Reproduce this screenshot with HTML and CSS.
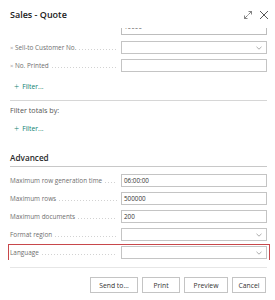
FILE: index.html
```html
<!DOCTYPE html>
<html>
<head>
<meta charset="utf-8">
<link rel="stylesheet" href="styles.css">
</head>
<body>
<div class="dialog">
  <header class="head">
    <h1 class="title">Sales - Quote</h1>
    <div class="tools">
      <svg class="ico" width="10" height="10" viewBox="0 0 10 10">
        <path d="M5.5 1.5H8.5V4.5M8.5 1.5L5.3 4.7M4.5 8.5H1.5V5.5M1.5 8.5L4.7 5.3" fill="none" stroke="#666" stroke-width="0.8"/>
      </svg>
      <svg class="ico" width="10" height="10" viewBox="0 0 10 10">
        <path d="M1 1L9 9M9 1L1 9" fill="none" stroke="#444" stroke-width="0.9"/>
      </svg>
    </div>
  </header>
  <div class="scroll">
    <div class="row partial">
      <span></span>
      <div class="box"><span class="val">10000</span></div>
    </div>
    <div class="rows first">
      <div class="row">
        <label class="lbl"><span class="x">×</span>Sell-to Customer No.<i class="lead"></i></label>
        <div class="box select"><svg class="chev" width="6" height="4" viewBox="0 0 6 4"><path d="M0.5 0.8L3 3.2L5.5 0.8" fill="none" stroke="#888" stroke-width="0.7"/></svg></div>
      </div>
      <div class="row">
        <label class="lbl"><span class="x">×</span>No. Printed<i class="lead"></i></label>
        <div class="box"></div>
      </div>
    </div>
    <div class="filter f1"><span class="plus">+</span>Filter...</div>
    <div class="sep"></div>
    <div class="cap">Filter totals by:</div>
    <div class="filter f2"><span class="plus">+</span>Filter...</div>
    <h2 class="section">Advanced</h2>
    <div class="rows adv">
      <div class="row">
        <label class="lbl">Maximum row generation time<i class="lead"></i></label>
        <div class="box"><span class="val">06:00:00</span></div>
      </div>
      <div class="row">
        <label class="lbl">Maximum rows<i class="lead"></i></label>
        <div class="box"><span class="val">500000</span></div>
      </div>
      <div class="row">
        <label class="lbl">Maximum documents<i class="lead"></i></label>
        <div class="box"><span class="val">200</span></div>
      </div>
      <div class="row">
        <label class="lbl">Format region<i class="lead"></i></label>
        <div class="box select"><svg class="chev" width="6" height="4" viewBox="0 0 6 4"><path d="M0.5 0.8L3 3.2L5.5 0.8" fill="none" stroke="#888" stroke-width="0.7"/></svg></div>
      </div>
    </div>
    <div class="highlight">
      <div class="row">
        <label class="lbl">Language<i class="lead"></i></label>
        <div class="box select"><svg class="chev" width="6" height="4" viewBox="0 0 6 4"><path d="M0.5 0.8L3 3.2L5.5 0.8" fill="none" stroke="#888" stroke-width="0.7"/></svg></div>
      </div>
    </div>
  </div>
  <div class="sep light"></div>
  <footer class="foot">
    <button class="btn w-send">Send to...</button>
    <button class="btn w-print">Print</button>
    <button class="btn w-prev">Preview</button>
    <button class="btn w-cancel">Cancel</button>
  </footer>
</div>
</body>
</html>
```
FILE: styles.css
```css
* { box-sizing: border-box; }
html, body { margin: 0; padding: 0; background: #fff; }
body { font-family: "Open Sans", "Noto Sans", sans-serif; color: #333; width: 275px; height: 300px; overflow: hidden; }
.dialog { width: 275px; height: 300px; display: flex; flex-direction: column; }
.head { height: 28px; flex: none; display: flex; justify-content: space-between; align-items: flex-start; padding: 8px 6px 0 10px; }
.title { margin: 0; font-size: 9px; line-height: 13px; font-weight: 600; color: #212121; }
.tools { display: flex; gap: 6px; padding-top: 2px; }
.ico { display: block; }
.scroll { height: 232px; flex: none; overflow: hidden; padding: 0 8px 0 10px; }
.row { display: grid; grid-template-columns: 111px 1fr; height: 13px; }
.partial { margin-top: -6px; }
.box { border: 1px solid #c4c4c4; height: 13px; background: #fff; display: flex; align-items: center; position: relative; padding-left: 2px; }
.partial .box { border-color: #bdbdbd; align-items: flex-start; }
.partial .val { line-height: 7px; color: #555; }
.val { font-size: 6.3px; color: #333; line-height: 11px; }
.select .chev { position: absolute; right: 4px; top: 4px; }
.rows { display: flex; flex-direction: column; gap: 5px; }
.rows.first { margin-top: 6px; }
.lbl { display: flex; align-items: center; font-size: 6.4px; color: #6e6e6e; white-space: nowrap; padding-right: 4px; }
.x { color: #a0a0a0; margin-right: 1.5px; font-size: 6px; }
.lead { flex: 1; height: 1px; margin: 3px 0 0 3px; background-image: linear-gradient(to right, #d2d2d2 1px, transparent 1px); background-size: 3px 1px; background-repeat: repeat-x; }
.filter { font-size: 6.8px; line-height: 10px; color: #0f7f72; display: flex; align-items: center; padding-left: 4px; }
.plus { font-size: 9px; margin-right: 3px; line-height: 10px; font-weight: 300; }
.f1 { margin-top: 10px; }
.f2 { margin-top: 9px; }
.sep { height: 1px; background: #d6d6d6; margin-top: 8px; }
.sep.light { background: #e6e6e6; margin: 7px 8px 0 10px; flex: none; }
.cap { font-size: 7.2px; line-height: 10px; color: #555; margin-top: 4px; }
.section { margin: 18px 0 0; font-size: 8.2px; line-height: 12px; font-weight: 600; color: #2a2a2a; padding-bottom: 2px; border-bottom: 1px solid #c8c8c8; }
.rows.adv { margin-top: 7px; }
.highlight { margin: 3px -3px 0 -2px; padding: 1px 2px 1px 1px; border: 1px solid #c8474b; }
.foot { display: flex; justify-content: flex-end; gap: 4px; padding: 9px 9px 0 0; }
.btn { height: 16px; border: 1px solid #c4c4c4; background: #fff; font-family: "Open Sans", "Noto Sans", sans-serif; font-size: 6.8px; color: #333; padding: 0; margin: 0; }
.w-send { width: 48px; }
.w-print { width: 38px; }
.w-prev { width: 44px; }
.w-cancel { width: 34px; }
```
